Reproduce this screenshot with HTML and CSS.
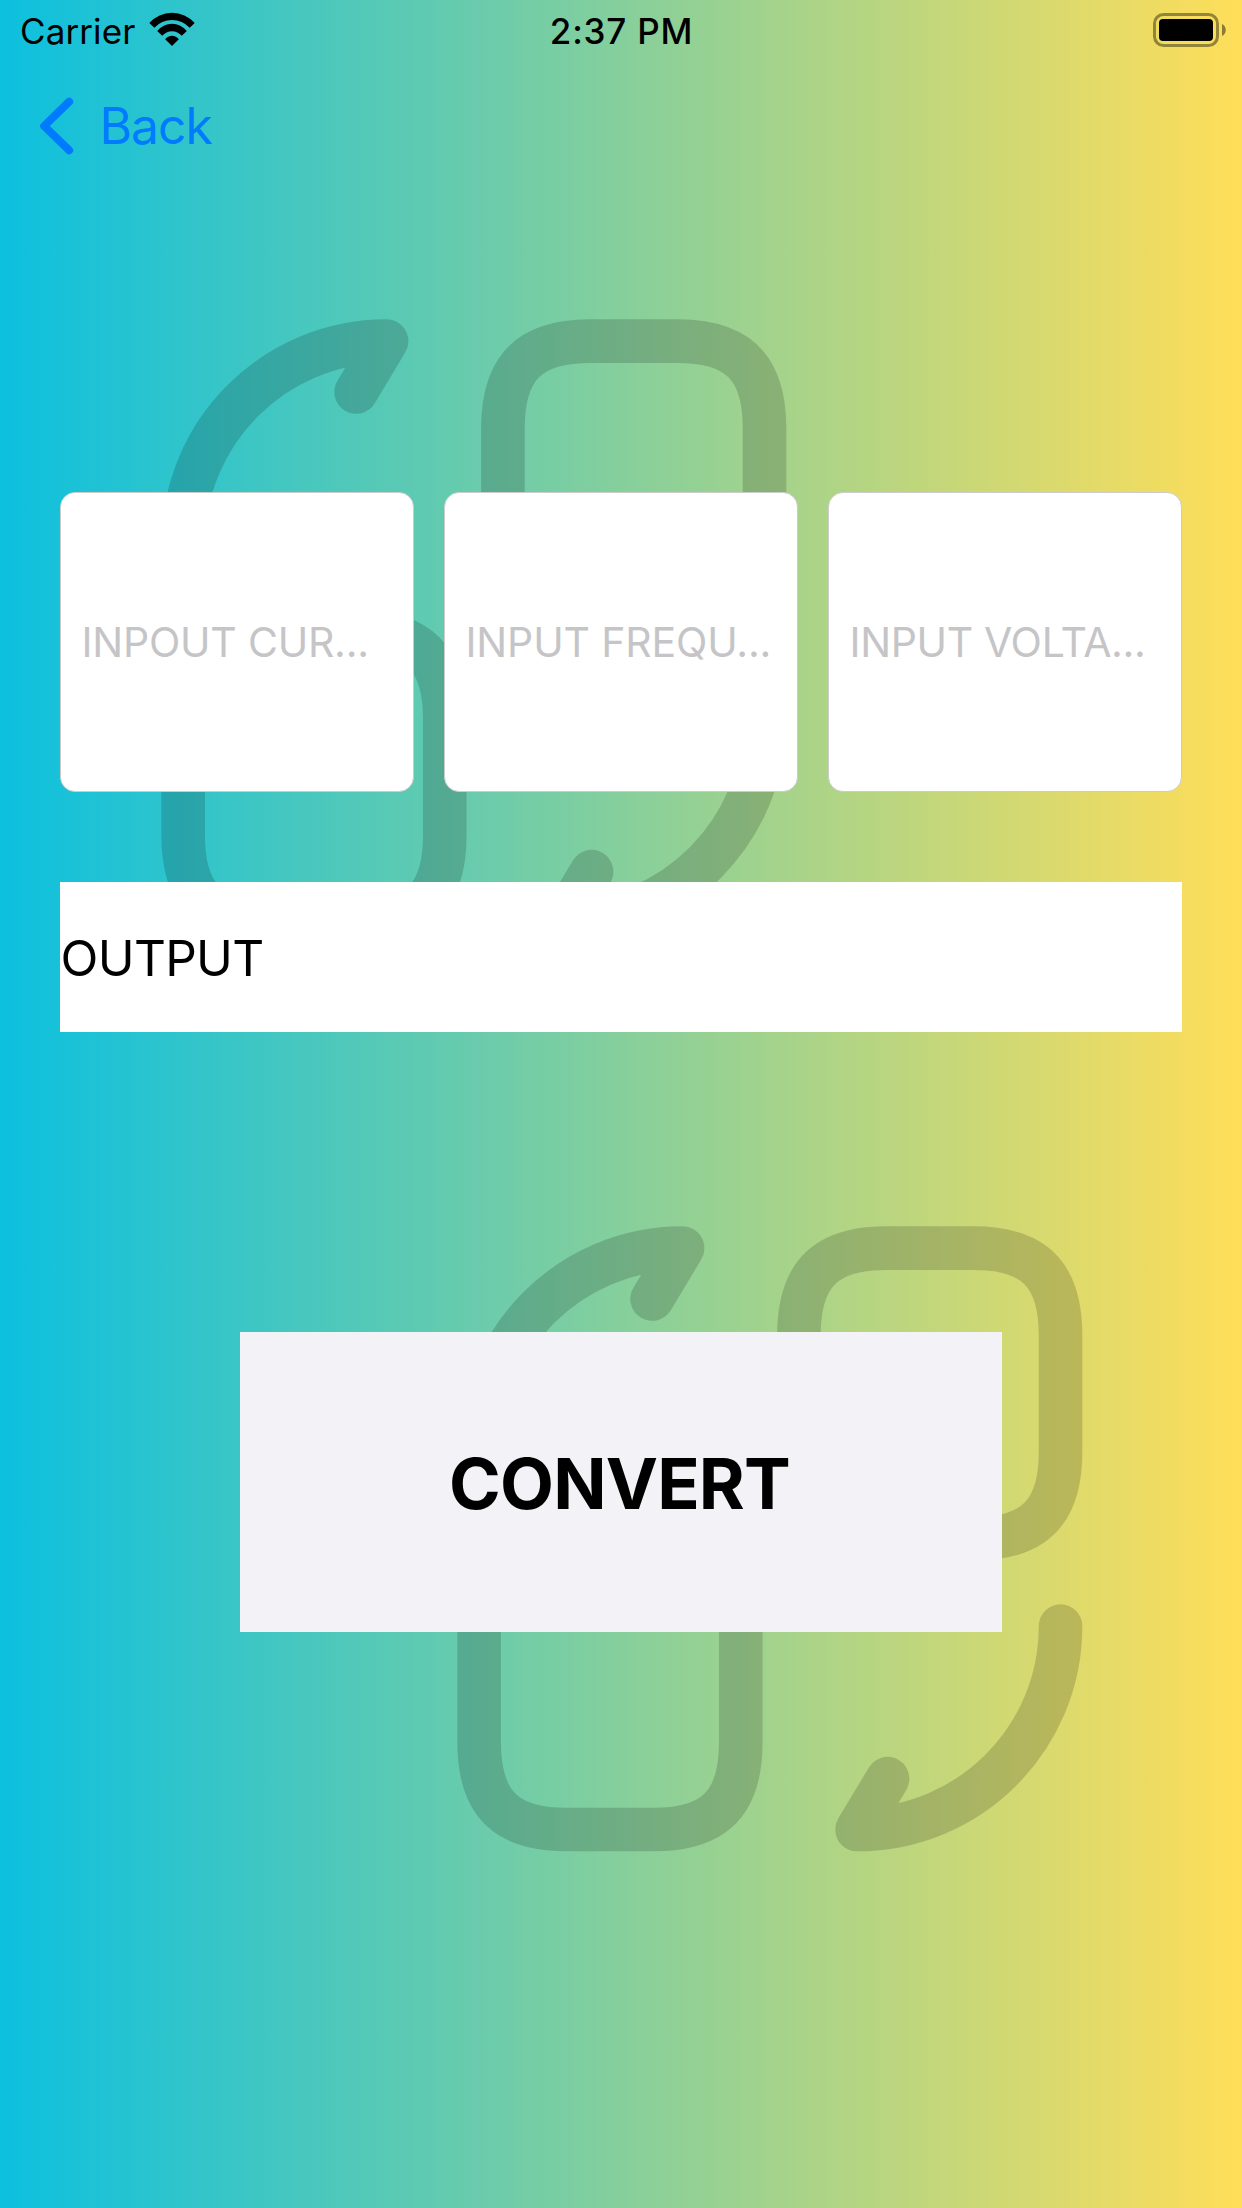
FILE: index.html
```html
<!DOCTYPE html>
<html lang="en">
<head>
<meta charset="utf-8">
<title>Convert</title>
<link rel="stylesheet" href="styles.css">
</head>
<body>
<svg class="defs" width="0" height="0" aria-hidden="true">
  <symbol id="convert-icon" viewBox="0 0 24 24">
    <g fill="none" stroke="#000" stroke-width="1.5" stroke-linecap="round" stroke-linejoin="round">
      <path d="M22 15c0 3.87-3.13 7-7 7l1.05-1.75"/>
      <path d="M2 9c0-3.87 3.13-7 7-7L7.95 3.75"/>
      <path d="M16 2h3c2.1 0 3 .9 3 3v4c0 2.1-.9 3-3 3h-3c-2.1 0-3-.9-3-3V5c0-2.1.9-3 3-3z"/>
      <path d="M5 12h3c2.1 0 3 .9 3 3v4c0 2.1-.9 3-3 3H5c-2.1 0-3-.9-3-3v-4c0-2.1.9-3 3-3z"/>
    </g>
  </symbol>
</svg>
<div class="screen">
  <svg class="mark mark-top" aria-hidden="true"><use href="#convert-icon"/></svg>
  <svg class="mark mark-bottom" aria-hidden="true"><use href="#convert-icon"/></svg>

  <header class="status">
    <div class="status-left">
      <span class="carrier">Carrier</span>
      <svg class="wifi" viewBox="148 12 48 35">
        <path d="M149.3 23A30.3 30.3 0 0 1 194.7 23L189.7 27.8A23.9 23.9 0 0 0 154.3 27.8Z"/>
        <path d="M157.2 31A18.9 18.9 0 0 1 186.8 31L181.8 35.8A13 13 0 0 0 162.2 35.8Z"/>
        <path d="M165.2 39.2A8.6 8.6 0 0 1 178.8 39.2L172 46Z"/>
      </svg>
    </div>
    <span class="time">2:37 PM</span>
    <div class="status-right">
      <svg class="battery" viewBox="0 0 74 34">
        <rect x="1.5" y="1.5" width="63" height="31" rx="9" fill="none" stroke="#000" stroke-opacity=".4" stroke-width="3"/>
        <rect x="6" y="6" width="54" height="22" rx="4"/>
        <path d="M69 11c5 2 5 10 0 12z" fill-opacity=".45"/>
      </svg>
    </div>
  </header>

  <nav class="nav">
    <a class="back">
      <svg class="chevron" viewBox="0 0 34 58"><path d="M29.2 4.7 4.2 29 29.2 53.3" fill="none" stroke="#007aff" stroke-width="8" stroke-linecap="round" stroke-linejoin="round"/></svg>
      <span>Back</span>
    </a>
  </nav>

  <main class="content">
    <div class="fields">
      <div class="field field-current">INPOUT CUR...</div>
      <div class="field field-frequency">INPUT FREQU...</div>
      <div class="field field-voltage">INPUT VOLTA...</div>
    </div>
    <div class="output">OUTPUT</div>
    <button class="convert" type="button">CONVERT</button>
  </main>
</div>
</body>
</html>
```
FILE: styles.css
```css
* { box-sizing: border-box; }

body {
  margin: 0;
  font-family: Inter, "Liberation Sans", sans-serif;
  color: #000;
}

.defs { display: block; }

.screen {
  position: relative;
  width: 1242px;
  height: 2208px;
  overflow: hidden;
  background: linear-gradient(90deg, #0cc0df, #ffde59);
}

.mark {
  position: absolute;
  width: 697.7px;
  height: 697.7px;
  opacity: .155;
}
.mark-top { left: 124.6px; top: 282.8px; }
.mark-bottom { left: 420.5px; top: 1189.6px; }

.status {
  position: relative;
  display: grid;
  grid-template-columns: 1fr auto 1fr;
  align-items: center;
  height: 60px;
  padding: 0 15px 0 20px;
  font-size: 35px;
  line-height: 42px;
}
.status-left {
  display: flex;
  align-items: center;
  gap: 12.5px;
}
.carrier {
  padding-top: 2px;
  letter-spacing: .1px;
}
.time {
  padding-top: 2px;
  margin-right: 4px;
  font-weight: 500;
  letter-spacing: .8px;
}
.wifi {
  width: 48px;
  height: 35px;
  margin-bottom: 1px;
}
.status-right {
  display: flex;
  justify-content: flex-end;
}
.battery { width: 74px; height: 34px; }

.nav {
  position: relative;
  display: flex;
  align-items: center;
  height: 132px;
  padding-left: 40px;
}
.back {
  display: flex;
  align-items: center;
  gap: 25.5px;
  color: #007aff;
  font-size: 50px;
  line-height: 60px;
  letter-spacing: -1.1px;
}
.chevron {
  width: 34px;
  height: 58px;
  margin-bottom: 1px;
}

.content {
  position: relative;
  display: flex;
  flex-direction: column;
  padding: 300px 60px 0;
}
.fields {
  display: grid;
  grid-template-columns: repeat(3, 1fr);
  gap: 30px;
}
.field {
  display: flex;
  align-items: center;
  height: 300px;
  padding-left: 20.5px;
  border: 1px solid #ccc;
  border-radius: 15px;
  background: #fff;
  color: #c5c5c7;
  font-size: 41px;
  white-space: nowrap;
}
.field-current { letter-spacing: -.22px; }
.field-frequency { letter-spacing: -.14px; }
.field-voltage { letter-spacing: -.34px; }

.output {
  height: 150px;
  margin-top: 90px;
  padding: 1px 0 0 .6px;
  background: #fff;
  font-size: 49.5px;
  line-height: 150px;
  letter-spacing: -.7px;
}

.convert {
  align-self: center;
  width: 762px;
  height: 300px;
  margin-top: 300px;
  padding: 3px 3px 0 0;
  border: 0;
  background: #f2f2f7;
  color: #000;
  font: 700 70px Inter, "Liberation Sans", sans-serif;
  letter-spacing: -.8px;
}
```
